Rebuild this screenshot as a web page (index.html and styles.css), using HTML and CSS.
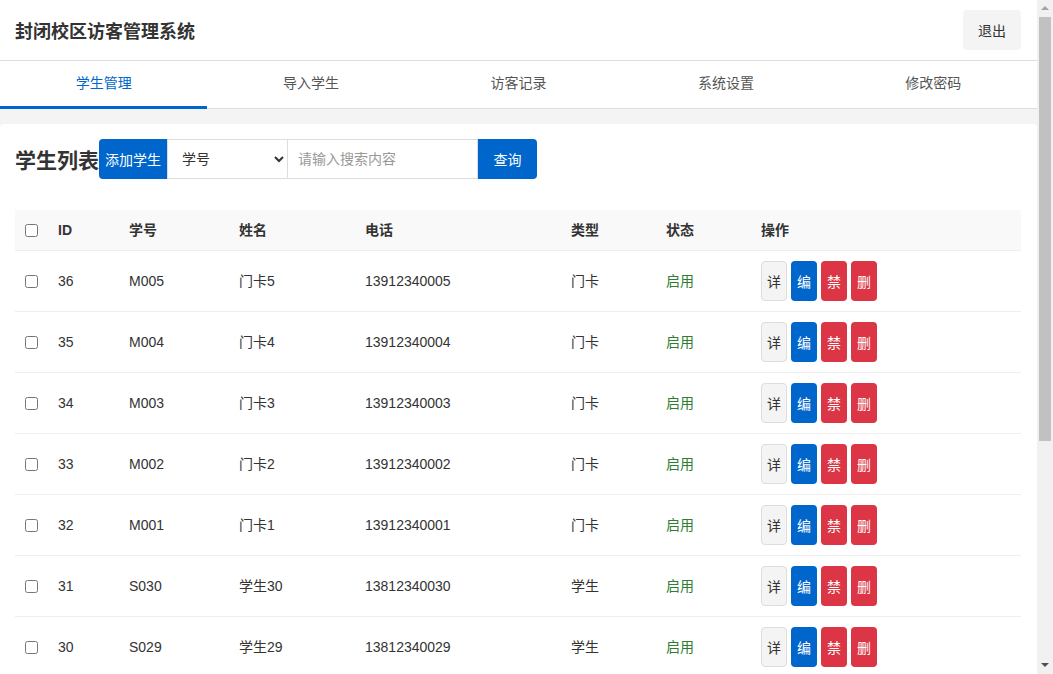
FILE: index.html
```html
<!DOCTYPE html>
<html lang="zh">
<head>
<meta charset="utf-8">
<title>封闭校区访客管理系统</title>
<link rel="stylesheet" href="styles.css">
</head>
<body>
<div class="page">
  <header class="topbar">
    <h1 class="brand">封闭校区访客管理系统</h1>
    <button class="logout">退出</button>
  </header>
  <nav class="tabs">
    <a class="tab active">学生管理</a>
    <a class="tab">导入学生</a>
    <a class="tab">访客记录</a>
    <a class="tab">系统设置</a>
    <a class="tab">修改密码</a>
  </nav>
  <main class="main">
    <section class="card">
      <div class="toolbar">
        <h2 class="card-title">学生列表</h2>
        <button class="btn-add">添加学生</button>
        <select class="field-select"><option>学号</option><option>姓名</option><option>电话</option></select>
        <input class="field-input" type="text" placeholder="请输入搜索内容">
        <button class="btn-query">查询</button>
      </div>
      <table class="grid">
        <colgroup>
          <col class="c-chk"><col class="c-id"><col class="c-no"><col class="c-name"><col class="c-tel"><col class="c-type"><col class="c-state"><col class="c-op">
        </colgroup>
        <thead>
          <tr><th><input type="checkbox"></th><th>ID</th><th>学号</th><th>姓名</th><th>电话</th><th>类型</th><th>状态</th><th>操作</th></tr>
        </thead>
        <tbody id="rows"></tbody>
      </table>
    </section>
  </main>
</div>
<div class="scrollbar" aria-hidden="true">
  <span class="sb-up"></span>
  <span class="sb-thumb"></span>
  <span class="sb-down"></span>
</div>
<script src="app.js"></script>
</body>
</html>
```
FILE: app.js
```js
const data = [
  [36,'M005','门卡5','13912340005','门卡'],
  [35,'M004','门卡4','13912340004','门卡'],
  [34,'M003','门卡3','13912340003','门卡'],
  [33,'M002','门卡2','13912340002','门卡'],
  [32,'M001','门卡1','13912340001','门卡'],
  [31,'S030','学生30','13812340030','学生'],
  [30,'S029','学生29','13812340029','学生']
];
const tb = document.getElementById('rows');
tb.innerHTML = data.map(r => `<tr>
<td><input type="checkbox"></td><td>${r[0]}</td><td>${r[1]}</td><td>${r[2]}</td><td>${r[3]}</td><td>${r[4]}</td>
<td class="on">启用</td>
<td><div class="ops"><button class="op op-view">详</button><button class="op op-edit">编</button><button class="op op-ban">禁</button><button class="op op-del">删</button></div></td>
</tr>`).join('');
```
FILE: styles.css
```css
* { box-sizing: border-box; }
html, body { margin: 0; padding: 0; }
html { height: 674px; overflow: hidden; }
body {
  font-family: "Liberation Sans", "Noto Sans CJK SC", sans-serif;
  font-size: 14px;
  color: #333;
  background: #f4f4f4;
}
button, input, select { font-family: inherit; font-size: 14px; }

.page { width: 1037px; }

.topbar {
  height: 61px;
  background: #fff;
  border-bottom: 1px solid #ddd;
  display: flex;
  align-items: center;
  justify-content: space-between;
  padding: 0 16px 0 15px;
}
.brand { margin: 0; font-size: 18px; font-weight: bold; color: #333; }
.logout {
  height: 40px;
  width: 58px;
  border: none;
  border-radius: 4px;
  background: #f4f4f4;
  color: #333;
  margin-top: -1px;
}

.tabs {
  display: flex;
  background: #fff;
  border-bottom: 1px solid #ddd;
  height: 48px;
}
.tab {
  flex: 1;
  display: flex;
  align-items: center;
  justify-content: center;
  color: #555;
  border-bottom: 3px solid transparent;
  margin-bottom: -1px;
  padding-bottom: 4px;
}
.tab.active { color: #0066cc; border-bottom-color: #0066cc; }

.main { padding-top: 15px; }
.card {
  background: #fff;
  border-radius: 4px;
  padding: 15px;
}
.toolbar { display: flex; align-items: center; height: 40px; margin-bottom: 31px; }
.card-title { margin: 0; font-size: 21px; font-weight: bold; color: #333; }
.btn-add {
  height: 40px;
  padding: 0 6px;
  border: none;
  border-radius: 4px 0 0 4px;
  background: #0066cc;
  color: #fff;
}
.field-select {
  height: 40px;
  width: 120px;
  border: 1px solid #ddd;
  border-right: none;
  background: #fff;
  color: #333;
  padding: 0 6px 0 10px;
}
.field-input {
  height: 40px;
  width: 191px;
  border: 1px solid #ddd;
  padding: 0 10px;
  outline: none;
}
.field-input::placeholder { color: #999; }
.btn-query {
  height: 40px;
  width: 59px;
  border: none;
  border-radius: 0 4px 4px 0;
  background: #0066cc;
  color: #fff;
}

.grid { width: 1006px; border-collapse: collapse; table-layout: fixed; }
.c-chk { width: 33px; } .c-id { width: 71px; } .c-no { width: 110px; } .c-name { width: 126px; }
.c-tel { width: 206px; } .c-type { width: 95px; } .c-state { width: 95px; } .c-op { width: 270px; }
.grid th, .grid td {
  text-align: left;
  padding: 10px;
  line-height: 20px;
  border-bottom: 1px solid #eee;
  vertical-align: middle;
}
.grid th { background: #f9f9f9; font-weight: bold; color: #333; height: 40px; }
.grid td { height: 61px; color: #333; }
.grid input[type=checkbox] { margin: 0; width: 13px; height: 13px; vertical-align: middle; position: relative; top: -1px; }
.grid td.on { color: #2e7d32; }
.ops { display: flex; gap: 4px; }
.op {
  height: 40px;
  width: 26px;
  padding: 0;
  border: none;
  border-radius: 4px;
  color: #fff;
}
.op-view { background: #f4f4f4; border: 1px solid #ddd; color: #333; }
.op-edit { background: #0066cc; }
.op-ban, .op-del { background: #dc3545; }

.scrollbar {
  position: fixed;
  top: 0;
  right: 0;
  width: 16px;
  height: 674px;
  background: #f1f1f1;
}
.sb-up, .sb-down {
  position: absolute;
  left: 4px;
  width: 0;
  height: 0;
  border-left: 4px solid transparent;
  border-right: 4px solid transparent;
}
.sb-up { top: 6px; border-bottom: 4px solid #a3a3a3; }
.sb-down { bottom: 7px; border-top: 4px solid #505050; }
.sb-thumb {
  position: absolute;
  top: 17px;
  left: 2px;
  width: 12px;
  height: 424px;
  background: #c1c1c1;
}
```
